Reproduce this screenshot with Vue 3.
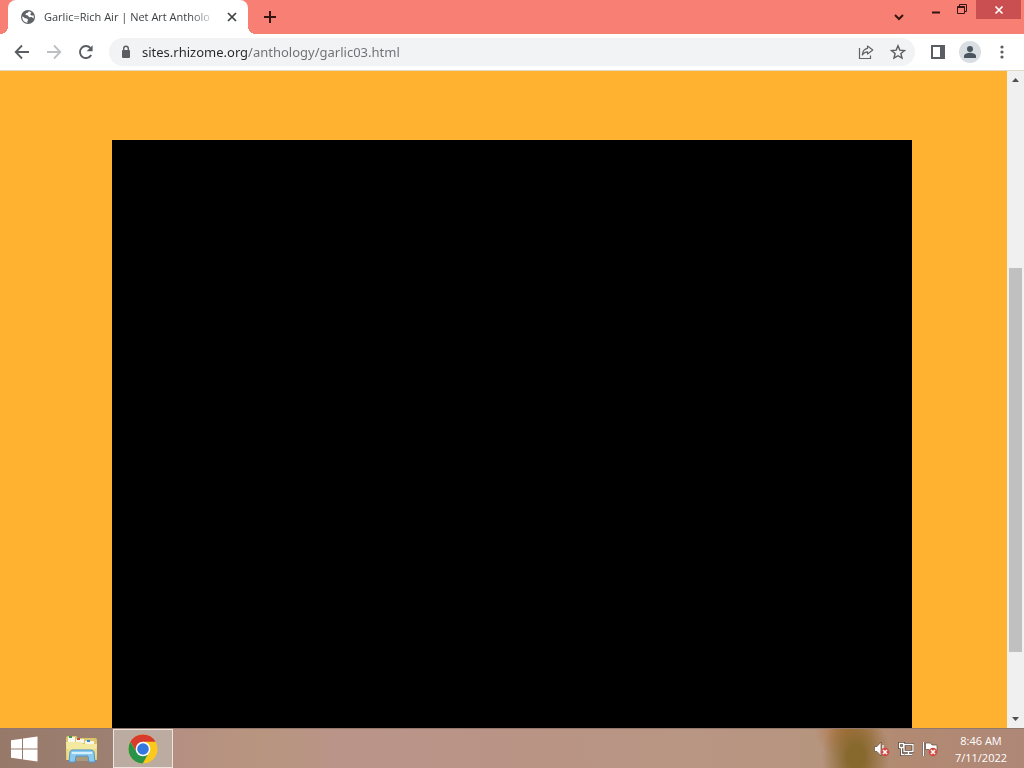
<script setup>
import { ref } from 'vue'

const title = 'Garlic=Rich Air | Net Art Antholo'
const url = ref('sites.rhizome.org/anthology/garlic03.html')

// scroll position of the page, in track units
const scroll = { before: 180, thumb: 384, after: 59 }
</script>

<template>
  <div class="desktop">
    <!-- Tab strip -->
    <header class="tabstrip">
      <div class="tab">
        <svg class="favicon" viewBox="0 0 16 16" width="16" height="16">
          <circle cx="8" cy="8" r="7" fill="#5f6368" />
          <path d="M2.6 7.2 5 9.2l2 .3 1.2 1.4-.9 1.2.3 1.6C4.7 13.7 2.4 11.5 2.2 8.5zM8.8 2.3l-1 1.5L6 4.3 5.3 6l2.2.3 1.8 1.9 2.5-.3 1.7 1.7c.4-1 .4-2.3.1-3.2l-2.2.2-1.2-1.4 1.2-1.6c-.8-.8-1.8-1.2-2.6-1.3z" fill="#fff" />
        </svg>
        <span class="title">{{ title }}</span>
        <button class="tab-close" aria-label="Close tab">
          <svg viewBox="0 0 16 16" width="16" height="16">
            <path d="M4 4l8 8M12 4l-8 8" stroke="#3c4043" stroke-width="1.7" />
          </svg>
        </button>
      </div>
      <button class="new-tab" aria-label="New tab">
        <svg viewBox="0 0 16 16" width="16" height="16">
          <path d="M8 2v12M2 8h12" stroke="#351512" stroke-width="2" />
        </svg>
      </button>
      <div class="window-controls">
        <button class="search-tabs" aria-label="Search tabs">
          <svg viewBox="0 0 16 16" width="16" height="16">
            <path d="M4 6l4 4 4-4" fill="none" stroke="#351512" stroke-width="2" />
          </svg>
        </button>
        <button class="win" aria-label="Minimize">
          <svg viewBox="0 0 16 16" width="16" height="16">
            <path d="M4 10.5h8" stroke="#351512" stroke-width="2" />
          </svg>
        </button>
        <button class="win" aria-label="Restore">
          <svg viewBox="0 0 16 16" width="16" height="16">
            <path d="M5.500 5V2.500h7v7H11" fill="none" stroke="#351512" />
            <path d="M3.500 4.500h7v7h-7zM3.500 5.500h7" fill="none" stroke="#351512" />
          </svg>
        </button>
        <button class="win win-close" aria-label="Close">
          <svg viewBox="0 0 16 16" width="16" height="16">
            <path d="M4.500 4.500l7 7M11.500 4.500l-7 7" stroke="#fff" stroke-width="1.7" />
          </svg>
        </button>
      </div>
    </header>

    <!-- Toolbar -->
    <nav class="toolbar">
      <button class="tool" aria-label="Back">
        <svg viewBox="0 0 16 16" width="16" height="16">
          <path d="M15 8H2M8 1.500L1.700 8 8 14.500" fill="none" stroke="#5a5d61" stroke-width="1.800" />
        </svg>
      </button>
      <button class="tool" aria-label="Forward" disabled>
        <svg viewBox="0 0 16 16" width="16" height="16">
          <path d="M1 8h13M8 1.500L14.300 8 8 14.500" fill="none" stroke="#bdbfc1" stroke-width="1.800" />
        </svg>
      </button>
      <button class="tool" aria-label="Reload">
        <svg viewBox="0 0 16 16" width="16" height="16">
          <path d="M13.200 11A6 6 0 1 1 12.400 4" fill="none" stroke="#5a5d61" stroke-width="1.900" />
          <path d="M14.600 1.300v6H8.600z" fill="#5a5d61" />
        </svg>
      </button>
      <form class="omnibox" @submit.prevent>
        <svg class="lock" viewBox="0 0 16 16" width="16" height="16">
          <rect x="4" y="6" width="8" height="8" rx="1" fill="#5a5d61" />
          <path d="M5.700 6.500V4.500a2.300 2.300 0 0 1 4.600 0v2" fill="none" stroke="#5a5d61" stroke-width="1.400" />
        </svg>
        <input v-model="url" class="url" type="text" aria-label="Address" spellcheck="false" />
        <button class="tool" type="button" aria-label="Share">
          <svg viewBox="0 0 16 16" width="16" height="16">
            <path d="M1.500 4v10.500h11v-3" fill="none" stroke="#606469" stroke-width="1.200" />
            <path d="M9.500 2L14.800 6l-5.300 4V7.800C7 7.800 5.400 9 4.300 11 4.600 7.200 6.300 4.800 9.500 4.300z" fill="none" stroke="#606469" stroke-width="1.200" stroke-linejoin="round" />
          </svg>
        </button>
        <button class="tool" type="button" aria-label="Bookmark this tab">
          <svg viewBox="0 0 16 16" width="16" height="16">
            <path d="M8 1.800l1.800 4.300 4.700.4-3.600 3 1.100 4.600L8 11.700l-4 2.400 1.100-4.600-3.600-3 4.700-.4z" fill="none" stroke="#5a5d61" stroke-width="1.400" />
          </svg>
        </button>
      </form>
      <button class="tool" aria-label="Side panel">
        <svg viewBox="0 0 16 16" width="16" height="16">
          <path d="M2 2h12v12H2z" fill="none" stroke="#5a5d61" stroke-width="2" />
          <path d="M10 2h4v12h-4z" fill="#5a5d61" />
        </svg>
      </button>
      <button class="tool" aria-label="Profile">
        <svg viewBox="0 0 22 22" width="22" height="22">
          <circle cx="11" cy="11" r="11" fill="#d9dee2" />
          <circle cx="11" cy="8" r="3" fill="#4b5560" />
          <path d="M5 17v-2c0-2.200 4-3.200 6-3.200s6 1 6 3.200v2z" fill="#4b5560" />
        </svg>
      </button>
      <button class="tool" aria-label="Menu">
        <svg viewBox="0 0 16 16" width="16" height="16" fill="#5a5d61">
          <circle cx="8" cy="3" r="1.600" />
          <circle cx="8" cy="8" r="1.600" />
          <circle cx="8" cy="13" r="1.600" />
        </svg>
      </button>
    </nav>

    <!-- Page -->
    <div class="viewport">
      <main class="page">
        <div class="stage"></div>
      </main>
      <div class="scrollbar">
        <button class="arrow" aria-label="Scroll up">
          <svg viewBox="0 0 17 17" width="17" height="17"><path d="M5 11h7L8.500 7z" fill="#505050" /></svg>
        </button>
        <div :style="{ flexGrow: scroll.before }"></div>
        <div class="thumb" :style="{ flexGrow: scroll.thumb }"></div>
        <div :style="{ flexGrow: scroll.after }"></div>
        <button class="arrow" aria-label="Scroll down">
          <svg viewBox="0 0 17 17" width="17" height="17"><path d="M5 6h7l-3.500 4z" fill="#505050" /></svg>
        </button>
      </div>
    </div>

    <!-- Taskbar -->
    <footer class="taskbar">
      <button class="task start" aria-label="Start">
        <svg viewBox="0 0 28 26" width="28" height="26" fill="#fff">
          <path d="M1 4.300l11-1.600v9.800H1zM13 2.500L27.500.5v12H13zM1 13.500h11v9.800L1 21.700zM13 13.500h14.500v12L13 23.500z" />
        </svg>
      </button>
      <button class="task" aria-label="File Explorer">
        <svg viewBox="0 0 34 30" width="34" height="30">
          <path d="M1 4q0-2 2-2h8l2 2h17q2 0 2 2v20H1z" fill="#dcc66d" />
          <path d="M3 3h7v5H3z" fill="#f7f7ef" />
          <path d="M4 2h3v2H4z" fill="#3d9b4e" />
          <path d="M11 5h8v4h-8z" fill="#f8f5e9" />
          <path d="M12 4h3v2h-3z" fill="#c74d3c" />
          <path d="M20 7h9v4h-9z" fill="#f8f5e9" />
          <path d="M22 6h3v2h-3z" fill="#3c86cd" />
          <path d="M1 8h15l2 2h14l-1 16H2z" fill="#f4e9a0" />
          <path d="M2 15h30l-1 11H2z" fill="#eadd86" />
          <path d="M11 22h12v5H11z" fill="#ab9a7c" />
          <path d="M4 28l1-10q.5-2 3-2h18q2.500 0 3 2l1 10h-6l-1-6H11l-1 6z" fill="#8dcaf0" stroke="#4b98d0" />
          <path d="M7 18h20l.5 2h-21z" fill="#d5effc" />
        </svg>
      </button>
      <button class="task active" aria-label="Google Chrome">
        <svg viewBox="0 0 30 30" width="30" height="30">
          <circle cx="15" cy="15" r="14.500" fill="#fbc91c" />
          <path d="M15 7.800h12.600A14.500 14.500 0 0 0 2.400 7.800L9 18.500z" fill="#d93a2e" />
          <path d="M2.400 7.800A14.500 14.500 0 0 0 14.700 29.500L21 18.500 15 22 8.800 18.600z" fill="#299449" />
          <circle cx="15" cy="15" r="7.300" fill="#fff" />
          <circle cx="15" cy="15" r="5.800" fill="#3478df" />
        </svg>
      </button>
      <div class="tray">
        <button class="tray-icon" aria-label="Volume muted">
          <svg viewBox="0 0 16 16" width="16" height="16">
            <path d="M.5 5.500H3L7 1v14l-4-4.500H.5z" fill="#fff" stroke="#60473d" stroke-width=".7" />
            <path d="M9 4v5" stroke="#fff" stroke-width="1.200" />
            <circle cx="11" cy="11" r="4.300" fill="#d34a42" />
            <path d="M9 9l4 4M13 9l-4 4" stroke="#fff" stroke-width="1.600" />
          </svg>
        </button>
        <button class="tray-icon" aria-label="Network">
          <svg viewBox="0 0 16 16" width="16" height="16" fill="none">
            <path d="M6 3.500h9v7H6zM10.500 10.500v3M7 13.500h7M1.500 2.500h4v4h-4zM3.500 6.500v7h3" stroke="#5a463d" stroke-width="3" />
            <path d="M6 3.500h9v7H6zM10.500 10.500v3M7 13.500h7M1.500 2.500h4v4h-4zM3.500 6.500v7h3" stroke="#fff" stroke-width="1.300" />
          </svg>
        </button>
        <button class="tray-icon" aria-label="Action Center">
          <svg viewBox="0 0 16 16" width="16" height="16">
            <path d="M1.500 1v14" stroke="#60473d" stroke-width="3" />
            <path d="M3.500 2h5l1.500 2h5v6H8L7 8.500H3.500z" fill="#fff" stroke="#60473d" stroke-width=".7" />
            <path d="M1.500 1v14" stroke="#fff" stroke-width="1.500" />
            <circle cx="11" cy="11" r="4.300" fill="#d34a42" />
            <path d="M9 9l4 4M13 9l-4 4" stroke="#fff" stroke-width="1.600" />
          </svg>
        </button>
        <button class="clock">
          <span>8:46 AM</span>
          <span>7/11/2022</span>
        </button>
      </div>
    </footer>
  </div>
</template>

<style>
body {
  margin: 0;
}
</style>

<style scoped>
.desktop {
  display: flex;
  flex-direction: column;
  min-height: 100vh;
  font-family: "Open Sans", "Noto Sans", sans-serif;
}

button {
  display: flex;
  align-items: center;
  justify-content: center;
  flex: none;
  padding: 0;
  border: 0;
  background: none;
  font-family: inherit;
}

svg {
  display: block;
  flex: none;
}

/* Tab strip */
.tabstrip {
  display: flex;
  height: 34px;
  padding: 0 3px 0 8px;
  background: #f77f73;
}

.tab {
  position: relative;
  display: flex;
  align-items: center;
  gap: 8px;
  width: 240px;
  box-sizing: border-box;
  padding: 0 8px 0 12px;
  border-radius: 8px 8px 0 0;
  background: #fff;
}

/* flared feet of the tab */
.tab::before,
.tab::after {
  content: "";
  position: absolute;
  bottom: 0;
  width: 8px;
  height: 8px;
}

.tab::before {
  right: 100%;
  background: radial-gradient(circle at 0 0, #f77f73 8px, #fff 8px);
}

.tab::after {
  left: 100%;
  background: radial-gradient(circle at 100% 0, #f77f73 8px, #fff 8px);
}

.title {
  flex: 1;
  min-width: 0;
  overflow: hidden;
  white-space: nowrap;
  font-size: 11px;
  line-height: 16px;
  color: #3c4043;
  mask-image: linear-gradient(to right, #000 85%, transparent);
}

.tab-close {
  width: 16px;
  height: 16px;
}

.new-tab {
  width: 28px;
  margin-left: 8px;
}

.window-controls {
  display: flex;
  margin-left: auto;
}

.search-tabs {
  width: 28px;
  margin-right: 10px;
}

.win {
  width: 26px;
  height: 19px;
}

.win-close {
  width: 45px;
  margin-left: 1px;
  background: #c94f50;
}

/* Toolbar */
.toolbar {
  display: flex;
  align-items: center;
  gap: 4px;
  height: 36px;
  padding: 0 8px;
  border-bottom: 1px solid #e3d8c4;
  background: #fff;
}

.tool {
  width: 28px;
  height: 28px;
}

.omnibox {
  flex: 1;
  display: flex;
  align-items: center;
  gap: 4px;
  min-width: 0;
  height: 28px;
  margin: 0 5px;
  padding: 0 3px 0 9px;
  border-radius: 14px;
  background: #f1f3f4;
}

.lock {
  margin-right: 4px;
}

.url {
  flex: 1;
  min-width: 0;
  padding: 0;
  border: 0;
  outline: 0;
  font-family: "Noto Sans", "Open Sans", sans-serif;
  font-size: 13px;
  line-height: 20px;
  color: #202124;
  /* host dark, path grey */
  background: linear-gradient(to right, #27282b 106px, #6b6f74 106px);
  background-clip: text;
  -webkit-text-fill-color: transparent;
}

/* Page */
.viewport {
  flex: 1;
  display: flex;
}

.page {
  flex: 1;
  display: flex;
  padding: 69px 95px 0 112px;
  background: #ffb230;
}

.stage {
  flex: 1;
  background: #000;
}

.scrollbar {
  display: flex;
  flex-direction: column;
  width: 17px;
  background: #f1f0f1;
}

.arrow {
  width: 17px;
  height: 17px;
}

.thumb {
  margin: 0 2px;
  background: #c1c0c1;
}

/* Taskbar */
.taskbar {
  display: flex;
  height: 40px;
  box-sizing: border-box;
  border-top: 1px solid #92786c;
  background:
    radial-gradient(ellipse 34px 48px at 856px 28px, #87682d 25%, transparent),
    radial-gradient(ellipse 34px 30px at 848px 0, #b0703a, transparent),
    linear-gradient(to right, #97796a, #9d8071 110px, #b58f82 175px, #b8957f 260px, #ba9489 340px, #b99583 700px, #b6957f 815px, #b28a72 900px, #ae8777);
}

.task {
  width: 58px;
}

.start {
  width: 47px;
  margin-right: 6px;
}

.active {
  width: 60px;
  margin-left: 2px;
  border: 1px solid #eee3dd;
  background: #bcaba1;
}

.tray {
  display: flex;
  align-items: center;
  margin-left: auto;
  padding-right: 8px;
}

.tray-icon {
  width: 24px;
  height: 24px;
}

.clock {
  flex-direction: column;
  width: 70px;
  margin-left: 4px;
  font-size: 11px;
  line-height: 17px;
  color: #fff;
}
</style>
